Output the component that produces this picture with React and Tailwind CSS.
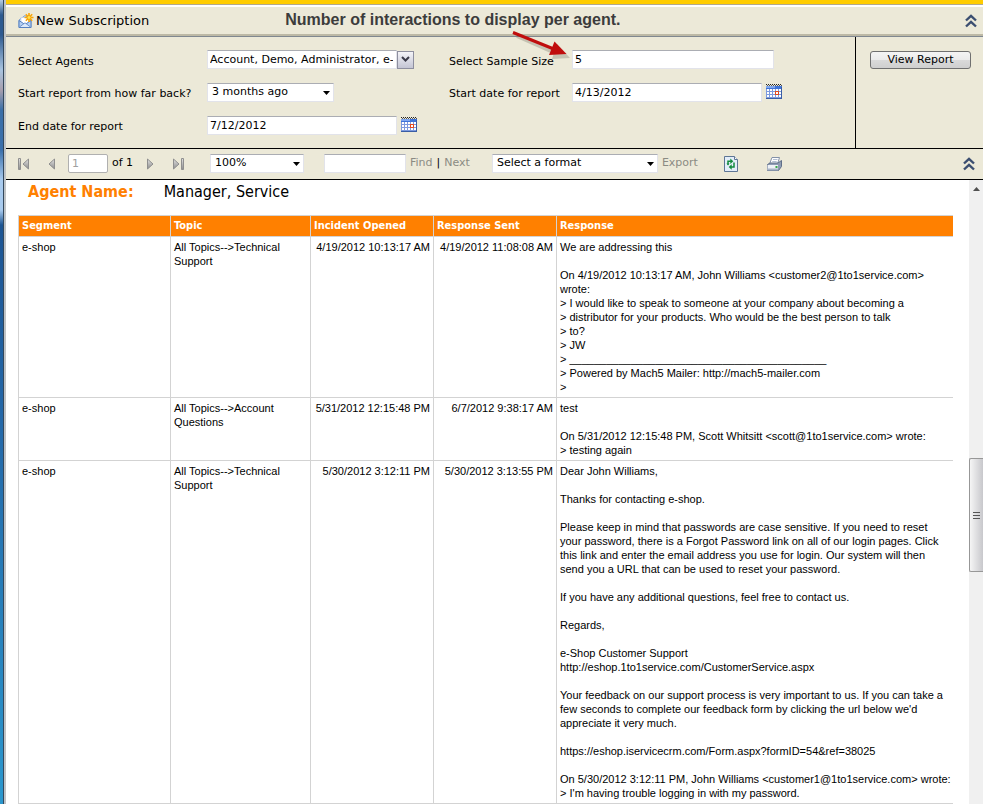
const UI = "font-['DejaVu_Sans',Verdana,sans-serif]";
const COND = "font-['DejaVu_Sans_Condensed',Tahoma,sans-serif]";

function Chevrons() {
  return (
    <svg width="12" height="14" viewBox="0 0 12 14" fill="none" stroke="#3b4e70" strokeWidth="2.4">
      <path d="M1 6.5 6 1.8 11 6.5M1 12.5 6 7.8 11 12.5" />
    </svg>
  );
}

function CalendarIcon() {
  return (
    <svg width="16" height="16" viewBox="0 0 16 16" shapeRendering="crispEdges">
      <rect x="0" y="2" width="16" height="13" fill="#7d9ade" />
      <rect x="0" y="2" width="16" height="3" fill="#3f74d8" />
      <rect x="0" y="2" width="9" height="2" fill="#7fa6ee" />
      {[0, 2, 4, 6, 8, 10, 12, 14].map((x) => (
        <rect key={x} x={x} y="0" width="1" height="1" fill="#222" />
      ))}
      {[1, 3, 5, 7, 9, 11, 13, 15].map((x) => (
        <rect key={x} x={x} y="1" width="1" height="1" fill="#555" />
      ))}
      {[5, 8, 11].map((y) =>
        [1, 4, 7, 10, 13].map((x) => <rect key={x + "-" + y} x={x} y={y} width="2" height="2" fill="#fff" />)
      )}
      <path d="M9 7h4v4H9z" fill="#e04a20" />
      <path d="M10 8h2v2h-2z" fill="#fff" />
      <path d="M15 3h1v12h-1zM0 14h16v1H0z" fill="#3a5da5" />
    </svg>
  );
}

function MailIcon() {
  return (
    <svg width="16" height="16" viewBox="0 0 16 16">
      <path d="M1 7 7 2.5 13 7v7.5H1z" fill="#cfe0f6" stroke="#7d9fd0" />
      <path d="M3 4.500h8v5L7 12 3 9.500z" fill="#fff" stroke="#b9cbe6" strokeWidth=".6" />
      <path d="M1 7.500 7 11.500 13 7.500V14.500H1z" fill="#b5cff2" stroke="#5580c0" />
      <path d="M1.500 14 7 9.800 12.500 14" fill="#dbe9fb" stroke="#5580c0" strokeWidth=".8" />
      <path d="M11 0v9M6.500 4.500h9M7.800 1.300l6.400 6.400M14.200 1.300 7.800 7.700" stroke="#f7a60a" strokeWidth="1.600" />
      <circle cx="11" cy="4.500" r="2" fill="#ffe34a" stroke="#f7a60a" />
    </svg>
  );
}

function RefreshIcon() {
  return (
    <svg width="14" height="16" viewBox="0 0 14 16">
      <path d="M.5.5h10l3 3v12H.5z" fill="#e3edf9" stroke="#5e7695" />
      <path d="M10.500.5v3h3" fill="#fff" stroke="#5e7695" />
      <path d="M4 8.500V5.200H7M10 6.500V11H7" fill="none" stroke="#128a3c" strokeWidth="1.500" />
      <path d="M6.300 2.500 9.300 5.200 6.300 8zM7.700 8.300 4.700 11 7.700 13.700z" fill="#128a3c" />
      <path d="M2.500 7.500h3L4 9.500z" fill="#128a3c" />
    </svg>
  );
}

function PrinterIcon() {
  return (
    <svg width="16" height="16" viewBox="0 0 16 16">
      <path d="M6 1.500h7.500L11.500 8H3.500z" fill="#fff" stroke="#8391a8" />
      <path d="M7 3.500h4.500M6.200 5.500h4.500" stroke="#b3bfd2" />
      <path d="M1.500 8.500 4 7h8l3.500-2.500v6L12.500 14.500h-11z" fill="#8e9cb3" stroke="#5f6e88" />
      <path d="M1.500 9h10.500v5H1.500z" fill="#eef1f6" />
      <path d="M1.500 12.500h10.500v2H1.500z" fill="#a9b4c6" />
      <path d="M9.500 10h2v2h-2z" fill="#35a845" />
    </svg>
  );
}

function NavIcon({ flip, bar }) {
  return (
    <svg width="12" height="12" viewBox="0 0 12 12" className={flip ? "-scale-x-100" : ""}>
      <defs>
        <linearGradient id="metal" x1="0" y1="0" x2="0" y2="1">
          <stop offset="0" stopColor="#e2e2e2" />
          <stop offset="1" stopColor="#8c8c8c" />
        </linearGradient>
      </defs>
      {bar && <path d="M.5.5h2v11h-2z" fill="url(#metal)" stroke="#8f8f8f" />}
      <path d="M10.500 1v10L5 6z" fill="url(#metal)" stroke="#8f8f8f" />
    </svg>
  );
}

function Caret() {
  return (
    <svg width="7" height="4" viewBox="0 0 7 4" className="pointer-events-none absolute right-1 top-2">
      <path d="M0 0h7L3.500 4z" fill="#000" />
    </svg>
  );
}

const field = "block h-[19px] border border-[#e2e3ea] border-t-[#abadb3] bg-white text-black outline-none";

function Select({ id, label, value, width }) {
  return (
    <span className={"relative block " + width}>
      <select id={id} aria-label={label} className={field + " w-full appearance-none pl-1"}>
        <option>{value}</option>
      </select>
      <Caret />
    </span>
  );
}

const rows = [
  {
    topic: "All Topics-->Technical Support",
    opened: "4/19/2012 10:13:17 AM",
    sent: "4/19/2012 11:08:08 AM",
    response: `We are addressing this

On 4/19/2012 10:13:17 AM, John Williams <customer2@1to1service.com>
wrote:
> I would like to speak to someone at your company about becoming a
> distributor for your products. Who would be the best person to talk
> to?
> JW
> __________________________________________
> Powered by Mach5 Mailer: http://mach5-mailer.com
>`,
  },
  {
    topic: "All Topics-->Account Questions",
    opened: "5/31/2012 12:15:48 PM",
    sent: "6/7/2012 9:38:17 AM",
    response: `test

On 5/31/2012 12:15:48 PM, Scott Whitsitt <scott@1to1service.com> wrote:
> testing again`,
  },
  {
    topic: "All Topics-->Technical Support",
    opened: "5/30/2012 3:12:11 PM",
    sent: "5/30/2012 3:13:55 PM",
    response: `Dear John Williams,

Thanks for contacting e-shop.

Please keep in mind that passwords are case sensitive. If you need to reset
your password, there is a Forgot Password link on all of our login pages. Click
this link and enter the email address you use for login. Our system will then
send you a URL that can be used to reset your password.

If you have any additional questions, feel free to contact us.

Regards,

e-Shop Customer Support
http://eshop.1to1service.com/CustomerService.aspx

Your feedback on our support process is very important to us. If you can take a
few seconds to complete our feedback form by clicking the url below we'd
appreciate it very much.

https://eshop.iservicecrm.com/Form.aspx?formID=54&ref=38025

On 5/30/2012 3:12:11 PM, John Williams <customer1@1to1service.com> wrote:
> I'm having trouble logging in with my password.`,
  },
];

function Header() {
  return (
    <header className="relative flex h-8 items-center border-b border-[#808890] bg-[#ece9d8] pl-3 pr-[6px] shadow-[inset_0_2px_0_#fff,inset_0_-2px_0_#bdb9a6]">
      <button className="flex items-center gap-[2px] text-[13px]">
        <MailIcon />
        New Subscription
      </button>
      <p className="ml-[136px] flex-1 pb-[2px] font-['Liberation_Sans',Arial,sans-serif] text-[16px] font-bold text-[#3c3c3c]">
        Number of interactions to display per agent.
      </p>
      <button aria-label="Collapse header"><Chevrons /></button>
      <svg width="70" height="40" viewBox="0 0 70 40" className="pointer-events-none absolute left-[500px] top-6 z-10 overflow-visible">
        <g fill="#6d6a5c" opacity=".3">
          <path d="m11 7 36 16" stroke="#6d6a5c" strokeWidth="4" />
          <path d="m51 15 13 14-18 1z" />
        </g>
        <path d="m7 3.500 42 17" stroke="#c00d0d" strokeWidth="3" />
        <path d="m48.500 12.500 12 12.500-17.500 1z" fill="#c00d0d" />
      </svg>
    </header>
  );
}

function Parameters() {
  return (
    <section className="flex border-b border-black bg-[#ece9d8] text-[11px]">
      <div className="grid h-[111px] flex-1 grid-cols-[189px_242px_123px_1fr] grid-rows-[33px_33px_33px] items-center pl-3 pt-[6px]">
        <label htmlFor="agents" className="pt-[6px]">Select Agents</label>
        <div className="flex items-center">
          <input id="agents" defaultValue="Account, Demo, Administrator, e-shop" className={field + " w-[190px] pl-[2px] pr-[3px]"} />
          <button aria-label="Choose agents" className="flex h-[18px] w-[17px] items-center justify-center border border-[#8e8f9f] bg-linear-to-b from-[#f4f4f8] to-[#c4c5d4]">
            <svg width="9" height="7" viewBox="0 0 9 7" fill="none" stroke="#3a3a48" strokeWidth="2"><path d="m1 1 3.500 3.500L8 1" /></svg>
          </button>
        </div>
        <label htmlFor="size" className="pt-[6px]">Select Sample Size</label>
        <input id="size" defaultValue="5" className={field + " w-[202px] pl-[2px]"} />
        <label htmlFor="back" className="pt-1">Start report from how far back?</label>
        <Select id="back" value="3 months ago" width="w-[127px]" />
        <label htmlFor="start" className="pt-1">Start date for report</label>
        <div className="flex items-center gap-1">
          <input id="start" defaultValue="4/13/2012" className={field + " w-[190px] pl-[2px]"} />
          <button aria-label="Pick start date" className="pb-[2px]"><CalendarIcon /></button>
        </div>
        <label htmlFor="end" className="pt-1">End date for report</label>
        <div className="flex items-center gap-1">
          <input id="end" defaultValue="7/12/2012" className={field + " w-[190px] pl-[2px]"} />
          <button aria-label="Pick end date" className="pb-[2px]"><CalendarIcon /></button>
        </div>
      </div>
      <div className="border-l border-black pl-[14px] pr-3 pt-[14px]">
        <button className="block h-[18px] w-[101px] rounded-[3px] border border-[#707070] bg-[linear-gradient(#f4f4f4,#ebebeb_50%,#dadada_50%,#cfcfcf)] leading-4">
          View Report
        </button>
      </div>
    </section>
  );
}

function Toolbar() {
  return (
    <nav className="flex h-[31px] items-center border-b border-black bg-[#ece9d8] pb-px pl-3 pr-2 text-[11px]">
      <button aria-label="First page"><NavIcon bar /></button>
      <button aria-label="Previous page" className="ml-[14px]"><NavIcon /></button>
      <input aria-label="Current page" defaultValue="1" className="ml-3 block h-[19px] w-10 rounded-[2px] border border-[#b0b0b0] bg-white pl-[3px] text-[#a0a0a0]" />
      <span className="ml-1 w-[22px] whitespace-nowrap">of 1</span>
      <button aria-label="Next page" className="ml-3"><NavIcon flip /></button>
      <button aria-label="Last page" className="ml-[14px]"><NavIcon flip bar /></button>
      <div className="ml-[26px]"><Select label="Zoom" value="100%" width="w-[94px]" /></div>
      <input aria-label="Find text" className={field + " ml-5 w-[82px]"} />
      <button className="ml-1 text-[#8b8b83]">Find</button>
      <span className="mx-1">|</span>
      <button className="text-[#8b8b83]">Next</button>
      <div className="ml-[22px]"><Select label="Export format" value="Select a format" width="w-[166px]" /></div>
      <button className="ml-1 text-[#8b8b83]">Export</button>
      <button aria-label="Refresh" className="ml-[26px]"><RefreshIcon /></button>
      <button aria-label="Print" className="ml-7"><PrinterIcon /></button>
      <button aria-label="Collapse parameters" className="ml-auto"><Chevrons /></button>
    </nav>
  );
}

function Report() {
  const th = "border border-[#d3d3d3] px-[3px] text-left";
  const td = "border border-[#d3d3d3] px-[3px] py-[3px] align-top";
  return (
    <main className="min-w-0 flex-1 overflow-hidden pl-3 pr-4">
      <h1 className={COND + " flex h-[35px] gap-[30px] pl-[10px] text-[16px] leading-6"}>
        <span className="font-bold text-[#ff8000]">Agent Name:</span>
        <span>Manager, Service</span>
      </h1>
      <table className="w-full table-fixed border-collapse font-['Liberation_Sans',Arial,sans-serif] text-[11px] leading-[14px]">
        <colgroup>
          <col className="w-[152px]" />
          <col className="w-[140px]" />
          <col className="w-[123px]" />
          <col className="w-[123px]" />
          <col />
        </colgroup>
        <thead>
          <tr className={COND + " h-[21px] bg-[#ff8000] text-white"}>
            <th className={th}>Segment</th>
            <th className={th}>Topic</th>
            <th className={th}>Incident Opened</th>
            <th className={th}>Response Sent</th>
            <th className={th + " border-r-0"}>Response</th>
          </tr>
        </thead>
        <tbody>
          {rows.map((r) => (
            <tr key={r.opened}>
              <td className={td}>e-shop</td>
              <td className={td}>{r.topic}</td>
              <td className={td + " whitespace-nowrap text-right"}>{r.opened}</td>
              <td className={td + " whitespace-nowrap text-right"}>{r.sent}</td>
              <td className={td + " whitespace-pre border-r-0"}>{r.response}</td>
            </tr>
          ))}
        </tbody>
      </table>
    </main>
  );
}

function Scrollbar() {
  return (
    <aside className="flex w-[14px] flex-none flex-col items-center overflow-hidden bg-[#f0f0f0]">
      <svg width="7" height="4" viewBox="0 0 7 4" className="mt-[7px]"><path d="M3.500 0 7 4H0z" fill="#505050" /></svg>
      <div className="mt-[267px] flex h-[114px] w-full flex-none flex-col items-center justify-center gap-[2px] rounded-l-[2px] border border-r-0 border-[#979797] bg-linear-to-r from-[#f5f5f5] to-[#c8c8cc]">
        <i className="h-px w-[7px] bg-[#555]" />
        <i className="h-px w-[7px] bg-[#555]" />
        <i className="h-px w-[7px] bg-[#555]" />
      </div>
    </aside>
  );
}

function WindowEdge() {
  return (
    <div className="flex w-[6px] flex-none bg-[#bfc3c6]">
      <div className="w-[3px] bg-[linear-gradient(#b5cbe2,#2d5a90_15px,#2d5a90_35px,#a9c4e0_70px,#a79fae_90px,#3a6fa8_110px,#3a70ac_150px,#a9cbee_180px,#a9cbee_210px,#1d5593_225px,#2468a8_420px,#2b97cd)]" />
      <div className="w-px bg-[#33485c]" />
    </div>
  );
}

export default function App() {
  return (
    <div className={UI + " flex h-screen overflow-hidden bg-white text-black"}>
      <WindowEdge />
      <div className="flex min-w-0 flex-1 flex-col">
        <div className="h-[5px] flex-none border-b border-[#b0a890] bg-[#ffcc00]" />
        <Header />
        <Parameters />
        <Toolbar />
        <div className="flex min-h-0 flex-1">
          <Report />
          <Scrollbar />
        </div>
      </div>
    </div>
  );
}
